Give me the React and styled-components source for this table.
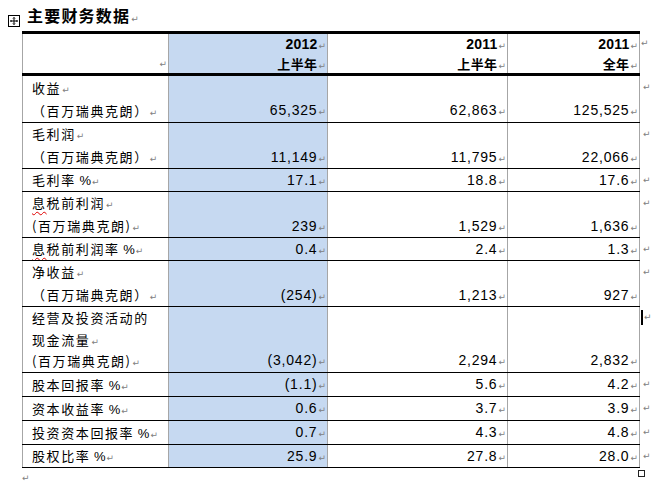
import React from 'react'
import styled, { createGlobalStyle } from 'styled-components'

const GlobalStyle = createGlobalStyle`
  html, body {
    margin: 0;
    padding: 0;
    background: #fff;
  }
  body {
    font-family: "Liberation Sans", Arial, sans-serif;
    color: #000;
  }
`

const cjk = `"Noto Sans CJK SC", "Noto Sans", sans-serif`

const header = [
  { year: '2012', sub: '上半年', shade: true },
  { year: '2011', sub: '上半年' },
  { year: '2011', sub: '全年' },
]

const rows = [
  { h: 46, label: [['收益', 1], ['（百万瑞典克朗）', 1]], v: ['65,325', '62,863', '125,525'] },
  { h: 45, label: [['毛利润', 1], ['（百万瑞典克朗）', 1]], v: ['11,149', '11,795', '22,066'] },
  { h: 22, label: [['毛利率 %', 1]], v: ['17.1', '18.8', '17.6'] },
  { h: 45, spell: true, label: [['息税前利润', 1], ['(百万瑞典克朗)', 1]], v: ['239', '1,529', '1,636'] },
  { h: 22, spell: true, label: [['息税前利润率 %', 1]], v: ['0.4', '2.4', '1.3'] },
  { h: 45, label: [['净收益', 1], ['（百万瑞典克朗）', 1]], v: ['(254)', '1,213', '927'] },
  {
    h: 65, cursor: true,
    label: [['经营及投资活动的', 0], ['现金流量', 1], ['(百万瑞典克朗)', 1]],
    v: ['(3,042)', '2,294', '2,832'],
  },
  { h: 23, label: [['股本回报率 %', 1]], v: ['(1.1)', '5.6', '4.2'] },
  { h: 23, label: [['资本收益率 %', 1]], v: ['0.6', '3.7', '3.9'] },
  { h: 23, label: [['投资资本回报率 %', 1]], v: ['0.7', '4.3', '4.8'] },
  { h: 22, label: [['股权比率 %', 1]], v: ['25.9', '27.8', '28.0'] },
]

const Page = styled.div`
  width: 653px;
  padding-left: 8px;
  box-sizing: border-box;
`

const TitleLine = styled.div`
  display: flex;
  align-items: flex-start;
  height: 31px;
`

const MoveHandle = styled.div`
  margin-top: 15px;
  width: 12px;
  height: 12px;
  box-sizing: border-box;
  border: 1px solid #000;
  display: flex;
  align-items: center;
  justify-content: center;
`

const Title = styled.div`
  margin: 5px 0 0 7px;
  font-family: ${cjk};
  font-weight: 700;
  font-size: 16px;
  letter-spacing: 1.2px;
  line-height: 21px;
`

const Mark = styled.span`
  display: inline-block;
  margin-left: ${p => p.$gap ?? 1}px;
  font-family: "DejaVu Sans", sans-serif;
  font-size: 9px;
  font-weight: 400;
  letter-spacing: 0;
  color: #808080;
`

const Table = styled.div`
  margin-left: 14px;
  display: flex;
  flex-direction: column;
`

const Row = styled.div`
  display: flex;
`

const Cells = styled.div`
  display: grid;
  grid-template-columns: 146px 159px 180px 133px;
  border-top: ${p => p.$top || 0}px solid #000;
  border-bottom: ${p => p.$bottom || 1}px solid #000;
`

const Cell = styled.div`
  height: ${p => p.$h}px;
  box-sizing: border-box;
  border-left: 1px solid #a6a6a6;
  border-right: ${p => (p.$last ? '1px solid #a6a6a6' : '0')};
  background: ${p => (p.$shade ? '#c6d9f1' : 'transparent')};
  display: flex;
  flex-direction: column;
  white-space: nowrap;
  overflow: hidden;
`

const LabelCell = styled(Cell)`
  padding-left: 9px;
  justify-content: flex-start;
  font-family: ${cjk};
  font-size: 13px;
  letter-spacing: 1.6px;
`

const Latin = styled.span`
  font-family: "Liberation Sans", Arial, sans-serif;
  letter-spacing: 0;
`

const NumCell = styled(Cell)`
  padding-right: 1px;
  justify-content: flex-end;
  align-items: flex-end;
  font-size: 14px;
  letter-spacing: 0.8px;
`

const HeadCell = styled(Cell)`
  padding: 2px 1px 0 0;
  align-items: flex-end;
  justify-content: ${p => (p.$empty ? 'flex-end' : 'flex-start')};
  font-weight: 700;
`

const Line = styled.div`
  height: ${p => p.$lh}px;
  line-height: ${p => p.$lh}px;
`

const Year = styled.div`
  line-height: 17px;
  font-size: 14px;
  letter-spacing: 0.2px;
`

const Sub = styled.div`
  line-height: 17px;
  font-family: ${cjk};
  font-size: 13px;
  letter-spacing: 0.4px;
`

const Spell = styled.span`
  text-decoration: underline wavy #e00000;
  text-decoration-thickness: 1px;
  text-underline-offset: 3px;
`

const RowEnd = styled.div`
  width: 15px;
  padding-left: 1px;
  display: flex;
  align-items: center;
  height: ${p => p.$lh}px;
  line-height: ${p => p.$lh}px;
`

const Cursor = styled.span`
  display: inline-block;
  width: 2px;
  height: 15px;
  background: #000;
`

const Footer = styled.div`
  width: 623px;
  margin-left: 14px;
  display: flex;
  justify-content: space-between;
  align-items: flex-start;
  height: 18px;
`

const ParaMark = styled(Mark)`
  margin: 3px 0 0 0;
  line-height: 14px;
`

const Resize = styled.div`
  margin-top: 2px;
  width: 7px;
  height: 7px;
  box-sizing: border-box;
  border: 1px solid #222;
`

function Label({ text, spell }) {
  let head = text
  let pct = null
  if (text.endsWith(' %')) {
    head = text.slice(0, -2)
    pct = <Latin> %</Latin>
  }
  if (spell && head.startsWith('息')) {
    return (
      <>
        <Spell>息</Spell>
        {head.slice(1)}
        {pct}
      </>
    )
  }
  return (
    <>
      {head}
      {pct}
    </>
  )
}

export default function App() {
  return (
    <Page>
      <GlobalStyle />
      <TitleLine>
        <MoveHandle>
          <svg width="8" height="8" viewBox="0 0 8 8" fill="none" stroke="#000" strokeWidth="1">
            <path d="M4 0.5V7.5M0.5 4H7.5" />
            <path d="M3 1.5L4 0.5L5 1.5M3 6.5L4 7.5L5 6.5M1.5 3L0.5 4L1.5 5M6.5 3L7.5 4L6.5 5" />
          </svg>
        </MoveHandle>
        <Title>
          主要财务数据<Mark>↵</Mark>
        </Title>
      </TitleLine>

      <Table>
        <Row>
          <Cells $top={3} $bottom={3}>
            <HeadCell $h={39} $empty>
              <Sub>
                <Mark>↵</Mark>
              </Sub>
            </HeadCell>
            {header.map((c, i) => (
              <HeadCell key={i} $h={39} $shade={c.shade} $last={i === header.length - 1}>
                <Year>
                  {c.year}
                  <Mark>↵</Mark>
                </Year>
                <Sub>
                  {c.sub}
                  <Mark>↵</Mark>
                </Sub>
              </HeadCell>
            ))}
          </Cells>
          <RowEnd $lh={22} style={{ marginTop: 1 }}>
            <Mark $gap={0}>↵</Mark>
          </RowEnd>
        </Row>

        {rows.map((r, ri) => {
          const lh = r.h / r.label.length
          return (
            <Row key={ri}>
              <Cells>
                <LabelCell $h={r.h}>
                  {r.label.map(([t, m], li) => (
                    <Line key={li} $lh={lh}>
                      <Label text={t} spell={r.spell} />
                      {m ? <Mark>↵</Mark> : null}
                    </Line>
                  ))}
                </LabelCell>
                {r.v.map((v, vi) => (
                  <NumCell key={vi} $h={r.h} $shade={vi === 0} $last={vi === 2}>
                    <Line $lh={lh}>
                      {v}
                      <Mark>↵</Mark>
                    </Line>
                  </NumCell>
                ))}
              </Cells>
              <RowEnd $lh={lh}>
                {r.cursor ? <Cursor /> : null}
                <Mark $gap={r.cursor ? 1 : 2}>↵</Mark>
              </RowEnd>
            </Row>
          )
        })}
      </Table>

      <Footer>
        <ParaMark>↵</ParaMark>
        <Resize />
      </Footer>
    </Page>
  )
}
